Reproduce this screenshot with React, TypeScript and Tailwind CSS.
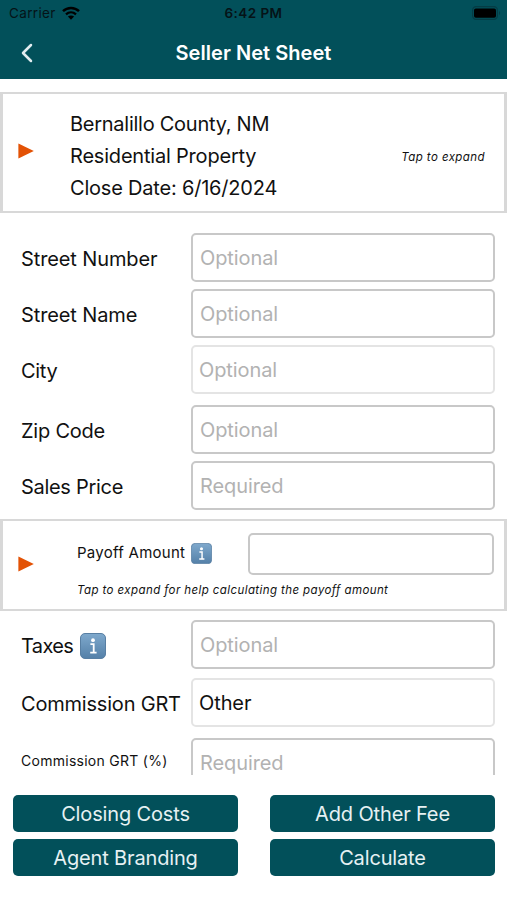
import { ChevronLeft } from 'lucide-react';

type FieldKind = 'text' | 'picker';

interface Field {
  label: string;
  placeholder?: string;
  value?: string;
  kind?: FieldKind;
  small?: boolean;
  info?: boolean;
  labelClass: string;
  rowClass: string;
}

const PROPERTY_FIELDS: Field[] = [
  { label: 'Street Number', placeholder: 'Optional', labelClass: 'tracking-[-0.12px]', rowClass: 'mt-5' },
  { label: 'Street Name', placeholder: 'Optional', labelClass: 'tracking-[-0.12px]', rowClass: 'mt-[7px]' },
  { label: 'City', placeholder: 'Optional', kind: 'picker', labelClass: 'tracking-[-0.3px]', rowClass: 'mt-[7px]' },
  { label: 'Zip Code', placeholder: 'Optional', labelClass: 'tracking-[-0.22px]', rowClass: 'mt-[11px]' },
  { label: 'Sales Price', placeholder: 'Required', labelClass: 'tracking-[-0.3px]', rowClass: 'mt-[7px]' },
];

const COST_FIELDS: Field[] = [
  { label: 'Taxes', placeholder: 'Optional', info: true, labelClass: 'tracking-[-0.65px]', rowClass: 'mt-[9px]' },
  { label: 'Commission GRT', value: 'Other', kind: 'picker', labelClass: 'tracking-[-0.2px]', rowClass: 'mt-[9px]' },
  { label: 'Commission GRT (%)', placeholder: 'Required', small: true, labelClass: 'tracking-[0.27px]', rowClass: 'mt-[11px]' },
];

const ACTIONS = ['Closing Costs', 'Add Other Fee', 'Agent Branding', 'Calculate'];

function InfoBadge({ className }: { className: string }) {
  return (
    <svg viewBox="0 0 26 26" className={className}>
      <defs>
        <linearGradient id="badge" x1="0" y1="0" x2="0" y2="1">
          <stop offset="0" stopColor="#7fa9cd" />
          <stop offset="1" stopColor="#5480a8" />
        </linearGradient>
      </defs>
      <rect x="0.5" y="0.5" width="25" height="25" rx="4.5" fill="url(#badge)" stroke="#587fa3" />
      <circle cx="13" cy="7.2" r="1.9" fill="#fff" />
      <path d="M10.4 11.1h3.3v8.2M10.2 19.7h6.4" fill="none" stroke="#fff" strokeWidth="1.8" />
    </svg>
  );
}

function Triangle({ className }: { className: string }) {
  return (
    <svg viewBox="0 0 16 16" className={`ml-[15px] h-4 w-4 shrink-0 ${className}`}>
      <path d="M0.4 0.4L15.8 8L0.4 15.4Z" fill="#e35205" />
    </svg>
  );
}

function StatusBar() {
  return (
    <div className="grid h-[27px] grid-cols-3 items-center px-[9px] text-[13.5px] leading-none text-[#051317]">
      <div className="flex items-center gap-[6px] pt-px">
        <span className="tracking-[0.35px]">Carrier</span>
        <svg viewBox="0 0 18 14" className="mb-[2px] h-[14px] w-[18px]">
          <path d="M1 5.2C5.5 0.9 12.5 0.9 17 5.2" fill="none" stroke="#000" strokeWidth="2.5" />
          <path d="M4 8.3C6.9 5.7 11.1 5.7 14 8.3" fill="none" stroke="#000" strokeWidth="2.3" />
          <path d="M9 13.7L5.9 10.6C7.6 9.1 10.4 9.1 12.1 10.6Z" fill="#000" />
        </svg>
      </div>
      <span className="pt-px text-center font-semibold tracking-[0.45px]">6:42 PM</span>
      <svg viewBox="0 0 29 14" className="mr-[-3px] mb-px h-[14px] w-[29px] justify-self-end">
        <rect x="0.6" y="0.6" width="24.8" height="12.8" rx="3.6" fill="none" stroke="#053c45" strokeWidth="1.2" />
        <rect x="2" y="2.4" width="22" height="9.4" rx="1.8" fill="#000" />
        <path d="M27 5v4c1.4-.6 1.4-3.4 0-4Z" fill="#053c45" />
      </svg>
    </div>
  );
}

function FieldRow({ field }: { field: Field }) {
  const picker = field.kind === 'picker';
  return (
    <div className={`flex h-[49px] shrink-0 items-center pr-3 pl-[21px] ${field.rowClass}`}>
      <div className={`flex w-[170px] shrink-0 items-center whitespace-nowrap ${field.small ? 'pb-1 text-[14px]' : 'pt-[3px] text-[20px]'}`}>
        <span className={field.labelClass}>{field.label}</span>
        {field.info && <InfoBadge className="mb-px ml-[7px] h-[26px] w-[26px]" />}
      </div>
      <div className={`flex h-[49px] flex-1 items-center rounded-[5px] border-2 pt-px text-[20px] tracking-[-0.1px] ${
        picker ? 'border-[#e4e4e4] pl-[6px]' : 'border-[#c8c8c8] pl-[7px]'
      }`}>
        {field.value ? <span>{field.value}</span> : <span className="text-[#b2b2b2]">{field.placeholder}</span>}
      </div>
    </div>
  );
}

export default function App() {
  return (
    <div className="flex h-[900px] w-[507px] flex-col overflow-hidden bg-white font-['Inter',sans-serif] text-[#111]">
      <header className="h-[79px] shrink-0 bg-[#02505a]">
        <StatusBar />
        <div className="grid h-[51px] grid-cols-[60px_1fr_60px] items-center">
          <ChevronLeft className="ml-[11px] h-8 w-8 text-[#e1edf0]" strokeWidth={1.9} />
          <h1 className="text-center text-[20px] font-semibold tracking-[0.05px] text-white">Seller Net Sheet</h1>
        </div>
      </header>

      <main className="flex h-[696px] shrink-0 flex-col overflow-hidden pt-[13px]">
        {/* Property summary */}
        <section className="flex h-[121px] shrink-0 items-center border-2 border-x-[3px] border-[#d8d8d8]">
          <Triangle className="mb-[3px]" />
          <div className="ml-[36px] pt-[6px] text-[20px] leading-8 tracking-[-0.2px]">
            <p className="tracking-[-0.26px]">Bernalillo County, NM</p>
            <p>Residential Property</p>
            <p>Close Date: 6/16/2024</p>
          </div>
          <span className="mt-[11px] mr-[19px] ml-auto text-[11.5px] tracking-[0.42px] italic">Tap to expand</span>
        </section>

        {PROPERTY_FIELDS.map((f) => <FieldRow key={f.label} field={f} />)}

        {/* Payoff */}
        <section className="mt-[9px] flex h-[92px] shrink-0 items-center border-2 border-x-[3px] border-[#d8d8d8]">
          <Triangle className="mb-[2px]" />
          <div className="ml-[43px] flex-1 pt-[2px] pr-[10px]">
            <div className="flex h-[42px] items-center">
              <span className="w-[109px] pb-px text-[15px] tracking-[0.27px] whitespace-nowrap">Payoff Amount</span>
              <InfoBadge className="mb-px ml-[5px] h-[21px] w-[21px]" />
              <div className="ml-auto h-[42px] w-[246px] rounded-[5px] border-2 border-[#c8c8c8]" />
            </div>
            <p className="mt-[6px] text-[11.5px] leading-[18px] tracking-[0.41px] italic">
              Tap to expand for help calculating the payoff amount
            </p>
          </div>
        </section>

        {COST_FIELDS.map((f) => <FieldRow key={f.label} field={f} />)}
      </main>

      <footer className="grid grid-cols-2 gap-x-8 gap-y-[7px] pt-5 pr-3 pl-[13px]">
        {ACTIONS.map((a) => (
          <button key={a} className="h-[37px] rounded-[5px] bg-[#02505a] text-[20px] tracking-[-0.15px] text-[#e6f1f3]">
            {a}
          </button>
        ))}
      </footer>
    </div>
  );
}
